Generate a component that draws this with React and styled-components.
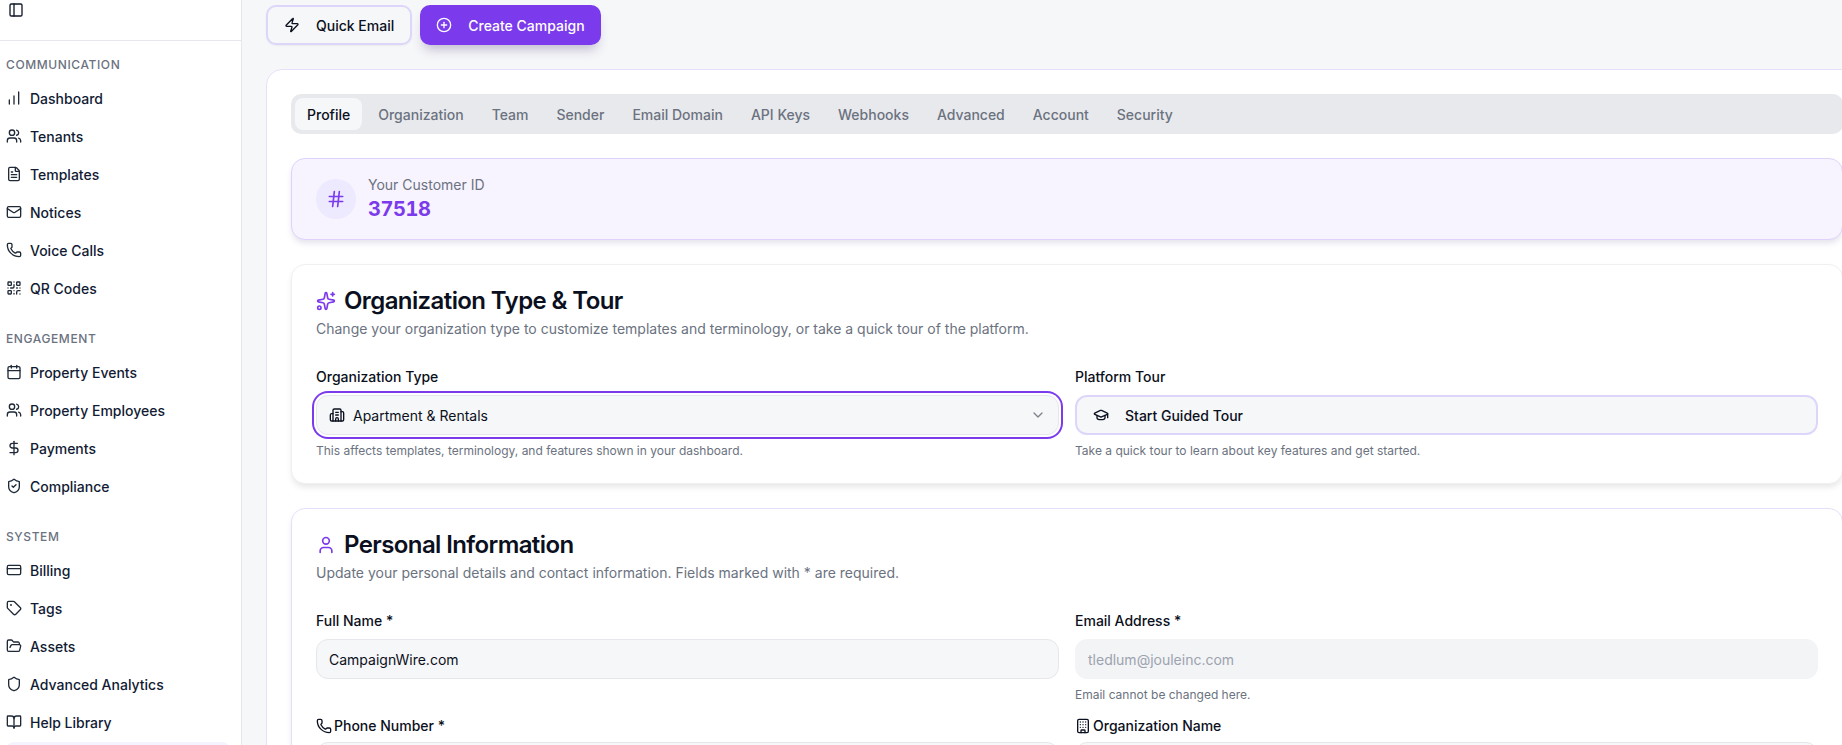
import styled, { createGlobalStyle } from "styled-components";
import {
  BookOpen,
  Building,
  Building2,
  Calendar,
  ChartNoAxesColumnIncreasing,
  ChevronDown,
  CirclePlus,
  CreditCard,
  DollarSign,
  FileText,
  FolderOpen,
  GraduationCap,
  Hash,
  Mail,
  PanelLeft,
  Phone,
  QrCode,
  Shield,
  ShieldCheck,
  Sparkles,
  Tag,
  User,
  Users,
  Zap,
} from "lucide-react";

const purple = "#7c3aed";

const GlobalStyle = createGlobalStyle`
  html, body {
    margin: 0;
    height: 100%;
    overflow: hidden;
  }
  body {
    font-family: Inter, "Noto Sans", sans-serif;
    color: #0b1020;
    background: #f6f7f9;
  }
  * {
    box-sizing: border-box;
  }
`;

const Shell = styled.div`
  display: flex;
  height: 100vh;
  overflow: hidden;
`;

const Sidebar = styled.aside`
  flex: none;
  width: 242px;
  height: 100%;
  overflow: hidden;
  background: #fff;
  border-right: 1px solid #e5e7eb;
`;

const SidebarHead = styled.div`
  height: 41px;
  padding: 2px 8px 0;
  border-bottom: 1px solid #e5e7eb;
  color: #111827;
`;

const Nav = styled.nav`
  padding: 7px 11px 0 6px;
`;

const NavGroup = styled.div`
  margin-bottom: 18px;
`;

const GroupLabel = styled.div`
  height: 32px;
  margin-bottom: 2px;
  display: flex;
  align-items: center;
  font-size: 12px;
  font-weight: 500;
  letter-spacing: 0.05em;
  text-transform: uppercase;
  color: #6b7280;
`;

const NavItem = styled.a`
  display: flex;
  align-items: center;
  gap: 8px;
  height: 32px;
  margin-bottom: 6px;
  font-size: 14px;
  font-weight: 500;
  color: #111b33;

  svg {
    flex: none;
    color: #1f2937;
  }
`;

const ActiveRow = styled.div`
  height: 32px;
  margin-top: -2px;
  border-radius: 8px;
  background: #f5f3ff;
`;

const Main = styled.main`
  flex: 1;
  min-width: 0;
  overflow: hidden;
  padding: 5px 0 0 24px;
`;

const Actions = styled.div`
  display: flex;
  gap: 8px;
  margin-bottom: 24px;
`;

const GhostButton = styled.button`
  display: flex;
  align-items: center;
  gap: 16px;
  height: 40px;
  padding: 0 16px;
  border: 2px solid #ded6fa;
  border-radius: 10px;
  background: #f6f7f9;
  font: 500 14px Inter, sans-serif;
  color: #0b1020;
  box-shadow: 0 1px 2px rgba(0, 0, 0, 0.05);
`;

const PrimaryButton = styled(GhostButton)`
  border: none;
  background: ${purple};
  color: #fff;
  box-shadow: 0 8px 12px -4px rgba(60, 40, 110, 0.3);
`;

const PageCard = styled.section`
  width: 1602px;
  padding: 24px;
  background: #fff;
  border: 1px solid #e8e0fa;
  border-radius: 16px;
`;

const TabBar = styled.div`
  display: flex;
  gap: 4px;
  height: 40px;
  padding: 4px;
  margin-bottom: 24px;
  border-radius: 10px;
  background: #e8e9ec;
`;

const Tab = styled.div`
  display: flex;
  align-items: center;
  padding: 0 12px;
  border-radius: 8px;
  font-size: 14px;
  font-weight: 500;
  background: ${({ $active }) => ($active ? "#f6f7f9" : "transparent")};
  color: ${({ $active }) => ($active ? "#0b1020" : "#6b7280")};
`;

const IdCard = styled.div`
  display: flex;
  align-items: center;
  gap: 12px;
  padding: 16px 24px;
  margin-bottom: 24px;
  border: 1px solid #dfd3fc;
  border-radius: 14px;
  background: #f7f3ff;
  box-shadow: 0 4px 6px -1px rgba(60, 40, 110, 0.14);
`;

const IdBadge = styled.div`
  display: flex;
  align-items: center;
  justify-content: center;
  width: 40px;
  height: 40px;
  border-radius: 50%;
  background: #ede9fe;
  color: ${purple};
`;

const IdLabel = styled.div`
  font-size: 14px;
  line-height: 20px;
  color: #6b7280;
`;

const IdValue = styled.div`
  font-size: 20px;
  line-height: 28px;
  font-weight: 700;
  font-variant-numeric: tabular-nums;
  letter-spacing: -0.4px;
  color: ${purple};
`;

const Card = styled.div`
  padding: 20px 24px 24px;
  margin-bottom: 24px;
  background: #fff;
  border: 1px solid ${({ $lilac }) => ($lilac ? "#e6dffa" : "#eef0f2")};
  border-radius: 14px;
  box-shadow: 0 4px 6px -1px rgba(0, 0, 0, 0.1);
`;

const CardTitle = styled.h2`
  display: flex;
  align-items: center;
  gap: 8px;
  margin: 0 0 2px;
  font-size: 24px;
  line-height: 32px;
  font-weight: 600;
  letter-spacing: -0.025em;
  color: #0b1020;

  svg {
    color: ${purple};
  }
`;

const CardDesc = styled.p`
  margin: 0 0 28px;
  font-size: 14px;
  line-height: 20px;
  color: #6b7280;
`;

const FieldGrid = styled.div`
  display: grid;
  grid-template-columns: 1fr 1fr;
  column-gap: 16px;
  row-gap: ${({ $gap }) => $gap || 0}px;
`;

const Label = styled.label`
  display: flex;
  align-items: center;
  gap: 2px;
  margin-bottom: ${({ $tight }) => ($tight ? "6px" : "8px")};
  font-size: 14px;
  line-height: 20px;
  font-weight: 500;
  color: #0b1020;
`;

const Hint = styled.div`
  margin-top: 8px;
  font-size: 12px;
  line-height: 16px;
  color: #6b7280;
`;

const SelectBox = styled.div`
  display: flex;
  align-items: center;
  gap: 8px;
  height: 40px;
  padding: 0 12px;
  border: 1px solid #e5e7eb;
  border-radius: 12px;
  background: #f6f7f9;
  font-size: 14px;
  color: #0b1020;
  box-shadow: 0 0 0 2px #fff, 0 0 0 4px ${purple};

  span {
    flex: 1;
  }
  .chevron {
    opacity: 0.5;
  }
`;

const TourButton = styled(GhostButton)`
  width: 100%;
  border-radius: 12px;
  box-shadow: none;
`;

const Input = styled.input`
  display: block;
  width: 100%;
  height: 40px;
  padding: 0 12px;
  border: 1px solid #e5e7eb;
  border-radius: 12px;
  background: #f6f7f9;
  font: 400 14px Inter, sans-serif;
  color: #0b1020;

  &:disabled {
    border-color: #f3f4f6;
    background: #f3f4f6;
    color: #9ca3af;
  }
`;

const navGroups = [
  {
    title: "Communication",
    items: [
      ["Dashboard", ChartNoAxesColumnIncreasing],
      ["Tenants", Users],
      ["Templates", FileText],
      ["Notices", Mail],
      ["Voice Calls", Phone],
      ["QR Codes", QrCode],
    ],
  },
  {
    title: "Engagement",
    items: [
      ["Property Events", Calendar],
      ["Property Employees", Users],
      ["Payments", DollarSign],
      ["Compliance", ShieldCheck],
    ],
  },
  {
    title: "System",
    items: [
      ["Billing", CreditCard],
      ["Tags", Tag],
      ["Assets", FolderOpen],
      ["Advanced Analytics", Shield],
      ["Help Library", BookOpen],
    ],
  },
];

const tabs = ["Profile", "Organization", "Team", "Sender", "Email Domain", "API Keys", "Webhooks", "Advanced", "Account", "Security"];

export default function App() {
  return (
    <Shell>
      <GlobalStyle />
      <Sidebar>
        <SidebarHead>
          <PanelLeft size={16} />
        </SidebarHead>
        <Nav>
          {navGroups.map((group) => (
            <NavGroup key={group.title}>
              <GroupLabel>{group.title}</GroupLabel>
              {group.items.map(([label, Icon]) => (
                <NavItem key={label}>
                  <Icon size={16} />
                  {label}
                </NavItem>
              ))}
              {group.title === "System" && <ActiveRow />}
            </NavGroup>
          ))}
        </Nav>
      </Sidebar>

      <Main>
        <Actions>
          <GhostButton>
            <Zap size={16} />
            Quick Email
          </GhostButton>
          <PrimaryButton>
            <CirclePlus size={16} />
            Create Campaign
          </PrimaryButton>
        </Actions>

        <PageCard>
          <TabBar>
            {tabs.map((tab, i) => (
              <Tab key={tab} $active={i === 0}>{tab}</Tab>
            ))}
          </TabBar>

          <IdCard>
            <IdBadge>
              <Hash size={20} />
            </IdBadge>
            <div>
              <IdLabel>Your Customer ID</IdLabel>
              <IdValue>37518</IdValue>
            </div>
          </IdCard>

          <Card>
            <CardTitle>
              <Sparkles size={20} />
              Organization Type & Tour
            </CardTitle>
            <CardDesc>Change your organization type to customize templates and terminology, or take a quick tour of the platform.</CardDesc>
            <FieldGrid>
              <div>
                <Label>Organization Type</Label>
                <SelectBox>
                  <Building2 size={16} />
                  <span>Apartment & Rentals</span>
                  <ChevronDown className="chevron" size={16} />
                </SelectBox>
                <Hint>This affects templates, terminology, and features shown in your dashboard.</Hint>
              </div>
              <div>
                <Label>Platform Tour</Label>
                <TourButton>
                  <GraduationCap size={16} />
                  Start Guided Tour
                </TourButton>
                <Hint>Take a quick tour to learn about key features and get started.</Hint>
              </div>
            </FieldGrid>
          </Card>

          <Card $lilac>
            <CardTitle>
              <User size={20} />
              Personal Information
            </CardTitle>
            <CardDesc>Update your personal details and contact information. Fields marked with * are required.</CardDesc>
            <FieldGrid $gap={13}>
              <div>
                <Label>Full Name *</Label>
                <Input defaultValue="CampaignWire.com" />
              </div>
              <div>
                <Label>Email Address *</Label>
                <Input disabled defaultValue="tledlum@jouleinc.com" />
                <Hint>Email cannot be changed here.</Hint>
              </div>
              <div>
                <Label $tight>
                  <Phone size={16} />
                  Phone Number *
                </Label>
                <Input />
              </div>
              <div>
                <Label $tight>
                  <Building size={16} />
                  Organization Name
                </Label>
                <Input />
              </div>
            </FieldGrid>
          </Card>
        </PageCard>
      </Main>
    </Shell>
  );
}
